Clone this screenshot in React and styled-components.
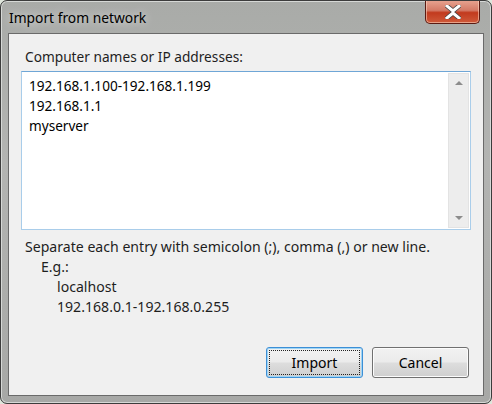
import styled, { createGlobalStyle } from "styled-components";

const GlobalStyle = createGlobalStyle`
  html, body { margin: 0; padding: 0; background: #dfe6dc; }
  body { font-family: "Noto Sans", "Open Sans", sans-serif; }
`;

const Window = styled.div`
  width: 492px;
  height: 404px;
  box-sizing: border-box;
  border: 1px solid #3c3c3c;
  border-radius: 7px;
  background: linear-gradient(180deg, #a9aba8 0%, #b3b4b2 40%, #a7a8a6 100%);
  display: flex;
  flex-direction: column;
  position: relative;
  overflow: hidden;
  box-shadow: inset 0 0 0 1px #d6d8d6;
`;

const TitleBar = styled.div`
  height: 32px;
  display: flex;
  align-items: center;
  padding-left: 8px;
  padding-top: 1px;
  box-sizing: border-box;
  font-size: 13.8px;
  color: #000;
  text-shadow: 0 0 8px rgba(255,255,255,0.8);
`;

const CloseButton = styled.div`
  position: absolute;
  top: -1px;
  right: 11px;
  width: 55px;
  height: 24px;
  box-sizing: border-box;
  border: 1px solid #5a1a12;
  border-top: none;
  border-radius: 0 0 5px 5px;
  background: linear-gradient(180deg, #e8a592 0%, #d47a66 45%, #c23a1e 55%, #cf5a3a 100%);
  box-shadow: inset 0 0 0 1px rgba(255,220,200,0.55);
  display: flex;
  align-items: center;
  justify-content: center;
`;

const Client = styled.div`
  flex: 1;
  margin: 0 7px 7px;
  border: 1px solid #6a6a6a;
  background: #f0f0f0;
  display: flex;
  flex-direction: column;
  padding: 13px 12px 17px;
  box-sizing: border-box;
  font-size: 13.7px;
  color: #1e1e1e;
`;

const Label = styled.div`
  padding-left: 4px;
  line-height: 20px;
  height: 24px;
`;

const TextBox = styled.div`
  height: 159px;
  box-sizing: border-box;
  border: 1px solid #a9cdea;
  border-top-color: #6fa6d6;
  background: #fff;
  display: flex;
  padding: 1px;
`;

const Lines = styled.div`
  flex: 1;
  padding: 3px 6px;
  line-height: 20px;
  font-size: 13.6px;
  color: #000;
`;

const ScrollBar = styled.div`
  width: 19px;
  border: 1px solid #e3e3e3;
  background: #ededed;
  display: flex;
  flex-direction: column;
  justify-content: space-between;
  align-items: center;
  padding: 7px 0;
`;

const Arrow = styled.div`
  width: 0;
  height: 0;
  border-left: 4px solid transparent;
  border-right: 4px solid transparent;
  ${({ $down }) => ($down ? `border-top: 4px solid #8c8c8c;` : `border-bottom: 4px solid #8c8c8c;`)}
`;

const Hint = styled.div`
  padding: 7px 0 0 4px;
  line-height: 20px;
  font-size: 14.1px;
`;

const Indent = styled.div`
  padding-left: ${({ $level }) => $level * 16}px;
`;

const Buttons = styled.div`
  margin-top: auto;
  display: flex;
  justify-content: flex-end;
  gap: 9px;
  padding-right: 2px;
`;

const Button = styled.div`
  width: 97px;
  height: 31px;
  box-sizing: border-box;
  border: 1px solid ${({ $default }) => ($default ? "#3c8fd6" : "#707070")};
  border-radius: 3px;
  background: linear-gradient(180deg, #f2f2f2 0%, #ebebeb 48%, #dddddd 52%, #cfcfcf 100%);
  box-shadow: inset 0 0 0 1px ${({ $default }) => ($default ? "#9fd5f5" : "#fcfcfc")};
  display: flex;
  align-items: center;
  justify-content: center;
  font-size: 14px;
  color: #000;
  position: relative;
  &::after {
    content: "";
    position: absolute;
    inset: 2px;
    border: 1px dotted #222;
    display: ${({ $default }) => ($default ? "block" : "none")};
  }
`;

export default function App() {
  return (
    <>
      <GlobalStyle />
      <Window>
        <TitleBar>Import from network</TitleBar>
        <CloseButton>
          <svg width="16" height="14" viewBox="0 0 16 14">
            <path d="M2 1 L8 6 L14 1 M2 13 L8 8 L14 13" stroke="#444" strokeWidth="4.6" fill="none" strokeLinecap="square" />
            <path d="M2 1 L8 6 L14 1 M2 13 L8 8 L14 13" stroke="#fff" strokeWidth="3" fill="none" strokeLinecap="square" />
          </svg>
        </CloseButton>
        <Client>
          <Label>Computer names or IP addresses:</Label>
          <TextBox>
            <Lines>
              <div>192.168.1.100-192.168.1.199</div>
              <div>192.168.1.1</div>
              <div>myserver</div>
            </Lines>
            <ScrollBar>
              <Arrow />
              <Arrow $down />
            </ScrollBar>
          </TextBox>
          <Hint>
            <div>Separate each entry with semicolon (;), comma (,) or new line.</div>
            <Indent $level={1}>E.g.:</Indent>
            <Indent $level={2}>localhost</Indent>
            <Indent $level={2}>192.168.0.1-192.168.0.255</Indent>
          </Hint>
          <Buttons>
            <Button $default>Import</Button>
            <Button>Cancel</Button>
          </Buttons>
        </Client>
      </Window>
    </>
  );
}
